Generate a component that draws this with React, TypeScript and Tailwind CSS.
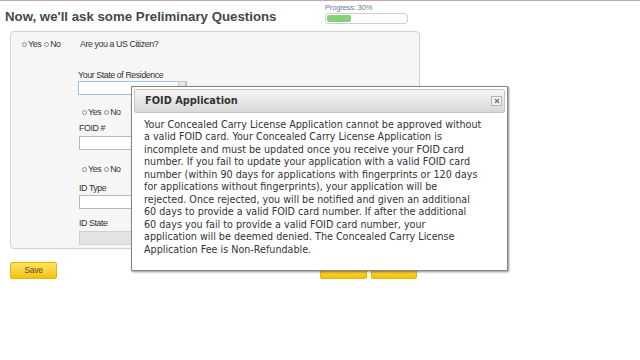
import React from "react";

const lbl = "text-[8.8px] tracking-[-0.4px] leading-[10px] text-[#333] whitespace-nowrap";

const Radio = ({ label }: { label: string }) => (
  <span className="flex items-center">
    <span className="w-[5px] h-[5px] rounded-full border border-[#8a8a8a] bg-white mr-[1px]" />
    {label}
  </span>
);

const YesNo = () => (
  <div className={`flex items-center gap-[3px] h-[10px] ${lbl}`}>
    <Radio label="Yes" />
    <Radio label="No" />
  </div>
);

const Label = ({ text, mt }: { text: string; mt: string }) => (
  <div className={`h-[10px] ${lbl} ${mt}`}>{text}</div>
);

const lines = [
  "Your Concealed Carry License Application cannot be approved without",
  "a valid FOID card. Your Concealed Carry License Application is",
  "incomplete and must be updated once you receive your FOID card",
  "number. If you fail to update your application with a valid FOID card",
  "number (within 90 days for applications with fingerprints or 120 days",
  "for applications without fingerprints), your application will be",
  "rejected. Once rejected, you will be notified and given an additional",
  "60 days to provide a valid FOID card number. If after the additional",
  "60 days you fail to provide a valid FOID card number, your",
  "application will be deemed denied. The Concealed Carry License",
  "Application Fee is Non-Refundable.",
];

const yellow =
  "h-[17px] rounded-[2px] border border-[#e3b600] bg-gradient-to-b from-[#ffe55a] to-[#f4c200]";

export default function App() {
  return (
    <div className="relative w-[640px] h-[360px] overflow-hidden bg-white font-['Liberation_Sans',Arial,sans-serif]">
      <div className="h-px bg-[#c9a7b0]" />
      {/* header */}
      <div className="flex h-[30px]">
        <div className="w-[320px] pl-[5px] pt-[8px]">
          <h1 className="text-[13.25px] leading-[15px] font-bold text-[#474747] whitespace-nowrap">
            Now, we'll ask some Preliminary Questions
          </h1>
        </div>
        <div className="ml-[5px] pt-[2px]">
          <div className="text-[7.6px] tracking-[-0.2px] leading-[10px] text-[#6b7b93] whitespace-nowrap">Progress: 30%</div>
          <div className="w-[83px] h-[11px] rounded-[3px] border border-[#cfcfcf] bg-white p-px">
            <div className="h-full w-[30%] rounded-[2px] bg-[#86d07a]" />
          </div>
        </div>
      </div>

      {/* form panel */}
      <div className="ml-[10px] w-[410px] h-[218px] rounded-[4px] border border-[#d3d3d3] bg-[#f6f6f6]">
        <div className="flex mt-[7px] h-[10px]">
          <div className="ml-[11px] w-[58px]">
            <YesNo />
          </div>
          <div className={lbl}>Are you a US Citizen?</div>
        </div>
        <div className="ml-[67px] flex flex-col">
          <Label text="Your State of Residence" mt="mt-[21px]" />
          <div className="mt-[1px] w-[109px] h-[14px] border border-[#a9c5df] bg-white flex justify-end">
            <div className="w-[8px] h-[6px] mt-[-1px] border border-[#c8c8c8] bg-[#e8e8e8]" />
          </div>
          <div className="mt-[12px] ml-[4px]">
            <YesNo />
          </div>
          <Label text="FOID #" mt="mt-[6px] ml-[1px]" />
          <div className="mt-[3px] ml-[1px] w-[109px] h-[14px] border border-[#b9b9b9] bg-white" />
          <div className="mt-[14px] ml-[4px]">
            <YesNo />
          </div>
          <Label text="ID Type" mt="mt-[9px] ml-[1px]" />
          <div className="mt-[2px] ml-[1px] w-[109px] h-[14px] border border-[#b9b9b9] bg-white" />
          <Label text="ID State" mt="mt-[9px] ml-[1px]" />
          <div className="mt-[3px] ml-[1px] w-[109px] h-[14px] border border-[#d0d0d0] bg-[#e3e3e3]" />
        </div>
      </div>

      {/* buttons */}
      <div className="flex mt-[13px] ml-[10px]">
        <button className={`w-[47px] ${yellow} text-[8.6px] tracking-[-0.3px] text-[#5b5030] flex items-center justify-center`}>
          Save
        </button>
        <div className={`ml-[263px] w-[47px] ${yellow}`} />
        <div className={`ml-[4px] w-[46px] ${yellow}`} />
      </div>

      {/* dialog */}
      <div className="absolute left-[131px] top-[86px] w-[377px] h-[185px] border border-[#858585] bg-white p-[2px] shadow-[1px_1px_2px_rgba(0,0,0,0.45)] font-['DejaVu_Sans',Verdana,sans-serif]">
        <div className="h-[24px] rounded-[2px] border border-[#c4c4c4] bg-gradient-to-b from-[#f6f6f6] to-[#d8d8d8] flex items-center pl-[10px] pr-[2px]">
          <span className="text-[9.8px] font-bold text-[#333]">FOID Application</span>
          <span className="ml-auto w-[11px] h-[10px] border border-[#b5b5b5] bg-[#f3f3f3] flex items-center justify-center">
            <svg width="6" height="6" viewBox="0 0 6 6">
              <path d="M1 1L5 5M5 1L1 5" stroke="#777" strokeWidth="1.3" />
            </svg>
          </span>
        </div>
        <div className="pt-[6px] pl-[10px] text-[9.6px] leading-[12.45px] text-[#333]">
          {lines.map((l, i) => (
            <div key={i} className="whitespace-nowrap">{l}</div>
          ))}
        </div>
      </div>
    </div>
  );
}
